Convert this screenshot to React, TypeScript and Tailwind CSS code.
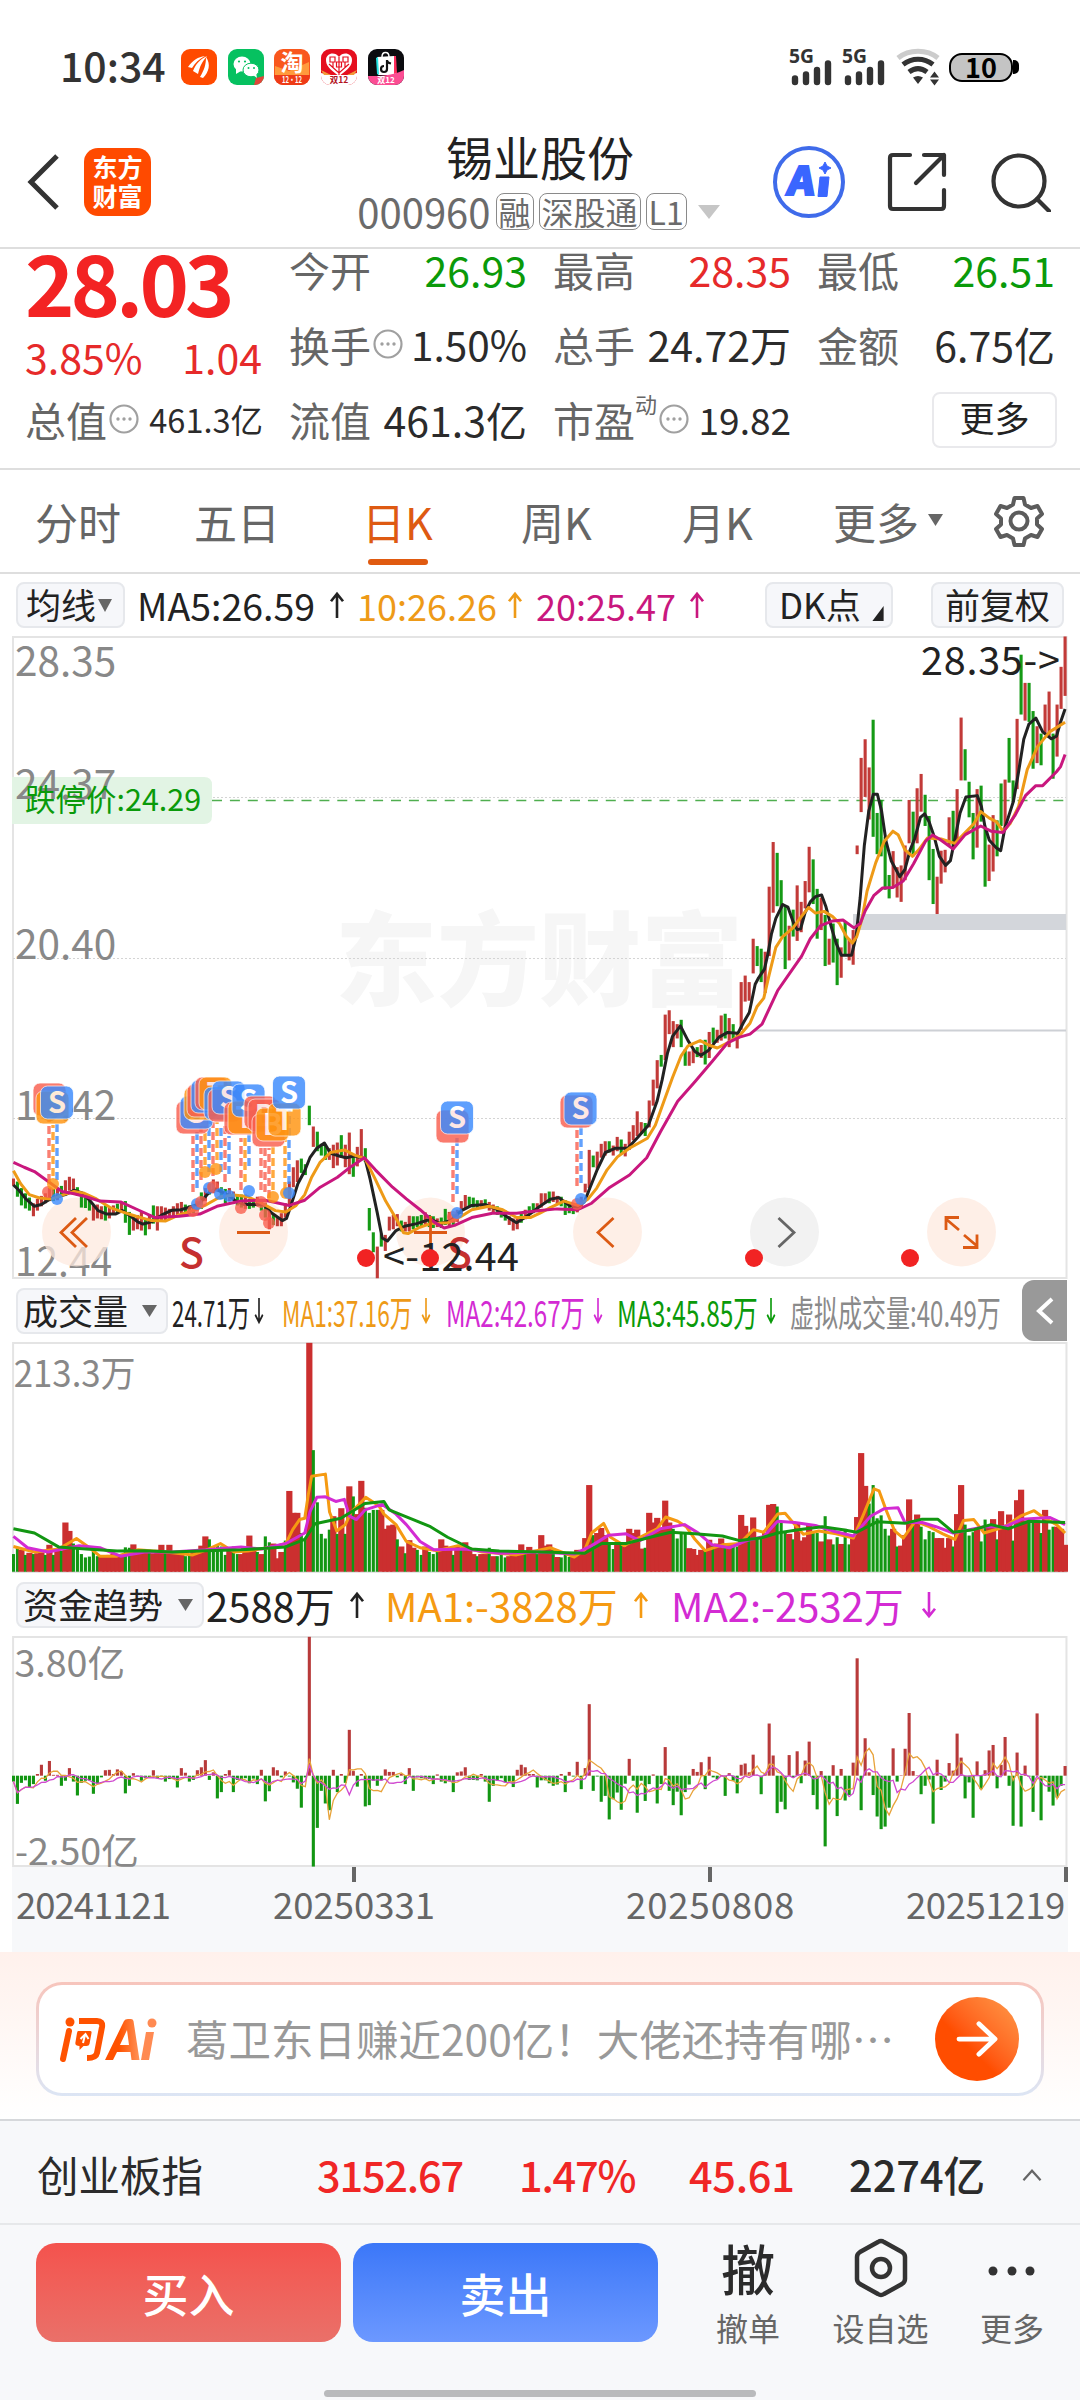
import { ReactNode } from 'react'

const RED = '#cb2f2f'
const GREEN = '#129612'

// horizontal position of the n-th trading day
const barX = (i: number) => 39 + 11.612 * i

// [high, low] per day, a negative high is a falling day
const CANDLES = [
  [1288, 1305], [-1295, 1330], [-1310, 1350], [-1322, 1357], [-1332, 1362], [1345, 1375], [1335, 1362], [1328, 1352],
  [1322, 1345], [1310, 1340], [-1312, 1340], [1310, 1338], [-1305, 1330], [1292, 1320], [1284, 1316], [1288, 1316],
  [-1308, 1328], [-1320, 1355], [-1330, 1356], [-1338, 1362], [1350, 1385], [1348, 1380], [1352, 1382], [-1350, 1385],
  [1355, 1380], [1350, 1372], [-1346, 1370], [1342, 1365], [-1340, 1390], [-1365, 1418], [1375, 1408], [1372, 1405],
  [1365, 1408], [-1380, 1419], [1370, 1405], [-1350, 1392], [1352, 1408], [1352, 1388], [1355, 1385], [1358, 1380],
  [1352, 1378], [1345, 1372], [1342, 1368], [-1348, 1372], [-1350, 1370], [-1348, 1368], [1340, 1362], [-1320, 1358],
  [1310, 1340], [-1300, 1325], [1290, 1322], [1295, 1318], [-1308, 1335], [-1312, 1345], [1310, 1340], [1318, 1340],
  [-1325, 1350], [-1325, 1355], [1325, 1358], [-1335, 1358], [-1335, 1355], [1330, 1352], [-1335, 1362], [-1345, 1378],
  [1355, 1405], [-1370, 1395], [1375, 1398], [1368, 1398], [1345, 1378], [1295, 1350], [1262, 1308], [1246, 1296],
  [-1242, 1275], [-1255, 1280], [-1120, 1165], [1168, 1215], [-1180, 1225], [-1208, 1235], [-1212, 1245], [1218, 1245],
  [1210, 1264], [1205, 1258], [-1188, 1240], [1210, 1262], [1182, 1278], [-1235, 1284], [1215, 1260], [1174, 1240],
  [-1218, 1250], [-1356, 1408], [-1412, 1458], [1445, 1518], [-1415, 1445], [1418, 1455], [1376, 1408], [1372, 1405],
  [1370, 1398], [-1385, 1410], [1388, 1410], [1374, 1410], [-1375, 1405], [-1375, 1400], [-1372, 1400], [1366, 1395],
  [-1372, 1400], [-1375, 1402], [1380, 1400], [-1378, 1402], [-1358, 1395], [1365, 1400], [-1370, 1395], [1360, 1388],
  [1340, 1370], [1326, 1358], [-1330, 1352], [-1332, 1355], [-1338, 1358], [1338, 1355], [-1336, 1355], [1342, 1362],
  [1348, 1368], [-1352, 1372], [-1358, 1378], [-1362, 1385], [1375, 1395], [1380, 1408], [1378, 1405], [-1368, 1390],
  [1360, 1382], [-1352, 1372], [-1345, 1368], [1345, 1365], [1322, 1355], [1322, 1345], [-1318, 1345], [1318, 1342],
  [1328, 1348], [-1330, 1352], [-1338, 1372], [-1345, 1368], [-1348, 1370], [1345, 1366], [1330, 1358], [1300, 1320],
  [1222, 1310], [-1235, 1262], [1226, 1265], [1208, 1240], [1202, 1235], [-1202, 1228], [1212, 1235], [1192, 1225],
  [-1198, 1232], [1208, 1237], [1180, 1222], [1165, 1200], [1133, 1190], [1158, 1185], [-1160, 1190], [1108, 1170],
  [1060, 1120], [1015, 1080], [-1003, 1030], [910, 1015], [900, 955], [925, 985], [932, 965], [-922, 985],
  [-990, 1028], [995, 1028], [990, 1022], [-985, 1008], [980, 1010], [-968, 1025], [950, 1010], [-940, 975],
  [945, 975], [912, 970], [-908, 965], [918, 985], [-932, 970], [950, 988], [835, 945], [820, 880],
  [835, 878], [735, 815], [-752, 798], [-758, 835], [765, 860], [615, 775], [512, 675], [-537, 660],
  [-600, 730], [-660, 805], [705, 785], [-668, 730], [612, 740], [650, 720], [602, 665], [523, 628],
  [-552, 655], [-620, 735], [640, 715], [-680, 798], [735, 795], [-700, 790], [-735, 842], [755, 825],
  [-695, 775], [735, 785], [715, 795], [520, 540], [318, 443], [275, 408], [340, 460], [-230, 500],
  [-445, 540], [-415, 545], [-500, 622], [-588, 642], [533, 618], [570, 640], [566, 650], [520, 600],
  [415, 515], [-442, 545], [388, 515], [355, 442], [-403, 475], [-452, 600], [-528, 655], [592, 678],
  [532, 608], [530, 582], [455, 520], [-440, 525], [390, 508], [225, 370], [-298, 370], [-373, 455],
  [-445, 552], [390, 525], [-382, 465], [-480, 615], [518, 602], [450, 580], [-462, 545], [-377, 475],
  [368, 480], [-272, 375], [-370, 420], [228, 390], [-80, 218], [145, 232], [-145, 235], [-210, 343],
  [245, 330], [-262, 335], [195, 262], [165, 272], [-262, 366], [195, 315], [108, 205], [38, 175],
]

// traded volume per day, negative on falling days
const VOLUME = [
  -42, -57, 52, -40, 45, -42, 44, 46, -40, 64, -40, 50, -50, 117, 97, -67, -54, -42, -34, -36, -50, -37, 36, 38,
  40, 42, 40, 40, -58, -57, 65, 52, 47, 47, -52, 44, 52, 64, -48, 64, 47, 42, 42, -37, -42, 47, 47, 62,
  84, -77, -60, -64, -60, -40, 52, -60, -42, 42, 47, 86, 52, -47, 42, -84, -70, 67, 32, 47, -74, 192, 140, 140,
  -92, -80, 544, -289, -165, -90, -79, -100, 132, -90, 151, -90, 203, -179, 137, 216, -152, -140, -147, -147, 147, 102, 110, 112,
  -77, 60, -44, 75, 57, -52, -40, 60, -47, -42, -52, 77, 62, 52, -40, 62, -52, 70, 57, 42, -37, 42, 42, -57,
  37, -37, -42, -34, 37, 40, 42, 65, -50, 59, 52, -42, 87, 62, 65, -52, 35, -34, -40, -35, 37, 52, 52, 80,
  206, -87, 92, 104, 87, -70, -54, 64, -64, 60, 102, 92, 100, 55, -57, 140, 117, 128, 102, 169, 117, -102, -79, -92,
  -90, 56, 54, 40, 52, -52, 76, -62, 67, 79, -67, 64, -62, -60, 135, 109, -87, 129, -80, -80, 92, 159, 161, -155,
  -117, -94, 90, -77, 117, 74, 82, 112, -92, -92, 72, -132, 77, -65, -82, 66, -102, -65, 82, 130, 282, 204, -162, -206,
  -127, -134, -102, -86, 102, -60, 62, 87, 172, -122, 136, -107, -77, -97, -94, 80, 80, 57, 80, -60, 137, 206, -112, -86,
  -94, 102, -72, -124, 107, 125, -77, 144, 112, 136, -74, 170, 195, 122, -122, -122, 122, -92, 147, -100, -107, 107, 102, 64,
]

// net capital flow per day
const FLOW = [
  -14, -67, -17, -11, -29, -20, 4, 26, -12, 35, 2, 2, -24, -12, 18, -14, -47, -17, -12, -11, -43, -19, -4, 13,
  14, 4, 15, 11, -42, -24, 6, -2, -12, -6, -4, 13, -6, -2, -14, -8, -8, -28, 18, 7, -14, -10, 13, 20,
  37, -10, 8, -54, -39, 4, 13, -39, -10, -8, -6, -18, -7, -20, 14, -61, -37, 20, 13, -4, 10, -2, -16, -31,
  -76, -4, 330, -216, -124, -36, -66, -82, 14, -39, 4, -17, 109, 11, -26, 4, -73, -70, -12, -24, -11, 15, 9, 9,
  -4, 4, -20, 18, -36, -4, -6, -8, -8, -20, 3, -14, -18, -13, -39, 8, 10, 20, -10, -10, -11, 4, -14, -62,
  -24, -12, -6, -16, -14, -27, 14, 26, 20, 4, 4, -28, -11, -11, -18, -24, -21, 4, -39, 9, -2, 33, -32, 18,
  170, -36, -2, -62, -48, -104, -56, -40, -81, -19, 40, -12, -88, -12, -60, -20, 3, -66, -20, 68, -36, -70, -38, -94,
  -39, -21, 16, 9, 32, -32, 45, -4, -8, 1, -48, 6, -12, -42, 26, 29, 8, 50, 1, -44, 6, 124, 48, -89,
  -62, -80, 49, -4, 58, -18, 36, 81, -46, -80, 11, -168, -56, 25, -96, 16, -59, -46, 31, 279, -82, 89, 8, -46,
  -97, -127, -121, -76, 65, -14, 1, 64, 149, 11, 1, -44, -24, -9, -114, 38, -34, -14, 30, 12, 100, 43, -54, -16,
  -100, 34, -32, 13, 60, 73, -30, 26, 92, -24, -119, 55, -121, 24, -2, -86, 148, -106, -6, -38, -71, -52, -24, 23,
]

const PRICE_MA = [
  { color: '#222222', points: '39,1303 55,1315 75,1335 100,1352 120,1348 140,1338 165,1330 190,1325 215,1315 240,1322 262,1340 285,1362 310,1370 335,1370 355,1362 380,1375 400,1388 415,1393 440,1388 470,1372 500,1361 525,1360 560,1352 580,1345 605,1322 625,1312 660,1325 685,1340 710,1348 740,1348 765,1348 790,1368 820,1385 832,1380 845,1350 865,1300 885,1270 900,1240 920,1218 942,1206 960,1230 985,1236 1005,1240 1030,1236 1060,1242 1075,1290 1095,1365 1110,1425 1125,1432 1150,1408 1175,1398 1210,1392 1250,1382 1280,1392 1310,1384 1340,1362 1370,1350 1410,1348 1440,1358 1470,1375 1500,1390 1530,1375 1568,1352 1598,1336 1623,1332 1653,1350 1678,1355 1698,1340 1713,1310 1733,1270 1758,1228 1788,1218 1823,1218 1853,1192 1883,1165 1908,1110 1923,1060 1938,1000 1953,960 1976,936 1998,970 2018,995 2035,1004 2058,992 2088,962 2113,951 2143,953 2158,930 2176,905 2193,840 2203,825 2220,805 2230,770 2240,725 2253,688 2273,656 2288,662 2305,700 2315,714 2325,712 2338,675 2353,650 2368,638 2386,634 2398,660 2413,705 2428,745 2443,773 2473,773 2486,730 2498,640 2510,520 2523,440 2536,402 2548,402 2560,440 2573,510 2588,555 2613,592 2628,575 2643,530 2656,505 2673,455 2685,447 2698,465 2713,500 2728,545 2746,566 2760,555 2773,505 2788,445 2805,408 2838,405 2850,430 2860,475 2873,508 2893,525 2906,532 2918,480 2943,418 2958,350 2973,275 2988,240 3008,226 3028,258 3053,274 3068,268 3080,235 3093,205' },
  { color: '#ee9a17', points: '39,1270 60,1300 85,1325 115,1333 150,1335 185,1325 215,1318 245,1322 280,1335 320,1355 355,1365 395,1375 440,1385 480,1386 520,1372 560,1362 600,1348 640,1330 680,1326 720,1330 760,1345 800,1362 830,1365 860,1350 885,1325 905,1285 930,1250 960,1228 1000,1222 1030,1234 1060,1242 1090,1290 1120,1340 1150,1380 1172,1413 1185,1415 1215,1402 1250,1392 1300,1390 1340,1375 1370,1360 1420,1352 1460,1360 1500,1378 1540,1378 1568,1368 1598,1355 1638,1340 1678,1350 1708,1335 1733,1310 1763,1268 1793,1238 1828,1218 1858,1205 1880,1195 1903,1165 1928,1110 1953,1055 1978,1005 1998,982 2033,970 2058,980 2083,987 2113,975 2148,958 2178,930 2198,892 2218,872 2233,820 2253,755 2273,730 2303,710 2323,688 2348,663 2368,676 2393,672 2418,684 2438,700 2458,730 2475,745 2488,730 2503,690 2518,625 2543,560 2568,510 2593,487 2608,495 2628,530 2650,545 2668,530 2693,503 2733,505 2773,515 2803,490 2828,470 2848,442 2873,457 2893,465 2913,487 2933,470 2958,430 2983,345 3013,292 3048,258 3093,236' },
  { color: '#c9177e', points: '39,1251 70,1262 100,1272 140,1295 180,1318 215,1323 250,1330 290,1340 350,1342 400,1360 450,1378 520,1375 580,1370 630,1352 700,1340 770,1338 840,1350 885,1338 930,1308 980,1285 1020,1260 1058,1240 1090,1268 1140,1308 1180,1335 1220,1360 1260,1388 1290,1402 1320,1396 1370,1378 1430,1368 1500,1368 1568,1362 1618,1358 1678,1360 1718,1345 1768,1310 1828,1280 1878,1240 1918,1180 1968,1110 2018,1065 2068,1018 2113,975 2148,962 2178,955 2213,932 2258,855 2293,815 2328,775 2353,735 2383,705 2418,694 2448,692 2480,710 2498,700 2513,670 2538,635 2563,618 2593,617 2623,602 2653,562 2688,510 2708,496 2728,505 2768,528 2803,495 2848,475 2878,487 2913,490 2948,450 2978,405 3008,382 3028,382 3068,350 3080,338 3093,310' },
]

const VOLUME_MA = [
  { color: '#f59a12', points: '39,632 100,645 170,638 222,613 260,635 290,655 340,655 400,640 480,645 560,652 600,640 640,625 680,645 720,643 800,632 830,625 850,592 870,568 885,565 895,510 905,465 945,460 957,550 978,595 1003,580 1020,550 1045,530 1062,515 1100,535 1115,555 1150,580 1180,620 1220,635 1270,642 1330,630 1400,645 1500,652 1568,640 1598,635 1668,657 1698,640 1718,600 1753,577 1773,610 1813,630 1858,610 1908,590 1933,562 1968,572 1993,585 2018,615 2048,642 2098,628 2148,625 2188,592 2218,598 2258,555 2280,553 2308,580 2333,603 2378,595 2428,602 2478,612 2508,555 2538,495 2553,500 2573,545 2598,595 2623,612 2658,572 2698,585 2738,602 2773,615 2798,570 2828,568 2858,600 2918,585 2963,560 3003,547 3028,562 3068,580 3093,600' },
  { color: '#d32bd3', points: '39,608 80,635 140,645 230,630 290,635 350,655 420,645 500,645 600,640 700,633 760,638 830,625 885,600 900,550 920,515 945,514 975,525 1000,520 1015,560 1035,568 1060,545 1110,532 1150,555 1180,580 1220,620 1260,640 1350,638 1450,648 1568,645 1668,650 1718,630 1768,605 1818,602 1858,618 1918,590 1988,580 2028,600 2068,628 2118,635 2168,618 2218,608 2258,572 2308,575 2368,582 2418,595 2478,607 2528,560 2568,542 2608,540 2628,575 2678,575 2718,585 2768,600 2858,585 2918,585 2968,567 3048,563 3093,580' },
  { color: '#129612', points: '39,590 100,600 170,633 250,638 340,643 420,642 500,645 600,642 700,640 830,633 885,615 915,578 990,565 1060,530 1115,525 1130,545 1200,568 1250,585 1300,610 1370,638 1450,643 1568,645 1698,648 1748,625 1818,625 1888,610 1948,598 2018,602 2098,607 2148,618 2208,612 2258,600 2318,592 2388,585 2448,592 2488,598 2548,573 2628,577 2678,567 2723,567 2768,598 2828,592 2878,580 2928,590 2988,572 3093,575' },
]

const MARK: Record<string, string> = { r: '#f95f4f', o: '#ff9410', b: '#3b8afd' }

// trade badges: x, y, colour, letter
const BADGES: [number, number, string, string][] = [
  [33, 1083, 'r', ''], [36, 1091, 'o', ''], [40.5, 1086, 'b', 'S'],
  [176, 1101, 'r', ''], [180, 1096, 'b', 'S'], [184, 1087, 'o', ''], [187, 1084, 'r', ''], [191, 1080, 'b', ''],
  [195, 1077, 'r', ''], [199, 1077, 'o', 'T'], [204, 1087, 'b', ''], [208, 1089, 'r', ''], [212, 1081, 'b', 'S'],
  [224, 1102, 'r', ''], [228, 1101, 'o', 'T'], [232, 1084, 'b', 'S'], [244, 1096, 'r', ''], [248, 1099, 'r', 'B'],
  [252, 1114, 'r', ''], [256, 1108, 'o', 'B'], [268, 1103, 'o', 'T'], [272.5, 1076, 'b', 'S'],
  [436, 1110, 'r', ''], [440.5, 1101, 'b', 'S'],
  [560, 1095, 'r', ''], [564, 1092, 'b', 'S'],
]

// dashed stems: x, top, bottom, colour
const STEMS: [number, number, number, string][] = [
  [49, 1120, 1182, 'r'], [53, 1125, 1176, 'o'], [57, 1121, 1180, 'b'],
  [193, 1136, 1192, 'r'], [197, 1132, 1188, 'b'], [201, 1126, 1180, 'r'], [205, 1126, 1165, 'o'], [209, 1120, 1172, 'b'],
  [213, 1122, 1176, 'r'], [217, 1122, 1160, 'o'], [221, 1124, 1172, 'b'], [225, 1124, 1182, 'r'], [229, 1136, 1174, 'b'],
  [241, 1138, 1190, 'r'], [245, 1136, 1182, 'o'], [249, 1134, 1166, 'b'],
  [261, 1148, 1190, 'r'], [265, 1148, 1192, 'r'], [269, 1148, 1198, 'r'], [273, 1142, 1190, 'o'],
  [285, 1136, 1190, 'o'], [289, 1110, 1184, 'b'],
  [453, 1145, 1202, 'r'], [457, 1136, 1194, 'b'], [577, 1129, 1186, 'r'], [581, 1126, 1183, 'b'],
]

const DOTS: [number, number, string][] = [
  [48, 1192, 'r'], [53, 1184, 'o'], [57, 1199, 'b'], [193, 1211, 'r'], [197, 1204, 'b'], [201, 1202, 'r'],
  [205, 1172, 'o'], [209, 1188, 'b'], [213, 1187, 'r'], [216, 1169, 'o'], [220, 1194, 'b'], [229, 1196, 'b'],
  [241, 1208, 'r'], [249, 1191, 'b'], [261, 1202, 'r'], [265, 1215, 'r'], [269, 1223, 'r'], [273, 1197, 'o'],
  [286, 1193, 'o'], [289, 1193, 'b'], [453, 1217, 'r'], [457, 1213, 'b'], [577, 1204, 'r'], [581, 1199, 'b'],
]

function average(values: number[], days: number) {
  return values.map((_, i) => {
    const part = values.slice(Math.max(0, i - days + 1), i + 1)
    return part.reduce((a, b) => a + b, 0) / part.length
  })
}

function Arrow({ down, narrow }: { down?: boolean, narrow?: boolean }) {
  return <svg viewBox="0 0 16 30" preserveAspectRatio="none" className={`h-[28px] flex-none ${narrow ? 'w-[10px]' : 'w-[16px]'} ${down ? 'rotate-180' : ''}`} fill="none" stroke="currentColor" strokeWidth="2.6">
    <path d="M8 29V3M2 11l6-8 6 8" />
  </svg>
}

function Triangle({ className }: { className: string }) {
  return <svg viewBox="0 0 10 8" preserveAspectRatio="none" className={`flex-none ${className}`} fill="currentColor">
    <path d="M0 0h10L5 8z" />
  </svg>
}

function Hint() {
  return <svg viewBox="0 0 30 30" className="ml-[2px] size-[30px] flex-none" fill="none" stroke="#a0a0a0" strokeWidth="2.200">
    <circle cx="15" cy="15" r="13.5" />
    <path d="M9 15h.01M15 15h.01M21 15h.01" strokeWidth="3.400" strokeLinecap="round" />
  </svg>
}

function SignalIcon() {
  return <svg viewBox="0 0 44 38" className="h-[38px] w-[44px] overflow-visible">
    <text x="-1" y="15" fontSize="19.500" fontWeight="700" fill="#333" fontFamily="Noto Sans" textLength="25" lengthAdjust="spacingAndGlyphs">5G</text>
    <g stroke="#333" strokeWidth="6.400" strokeLinecap="round">
      <path d="M5 30.500v3.500M16 26.500v7.500M27 22v12M38 15.500v18.500" />
    </g>
  </svg>
}

function StatusBar() {
  return <div className="flex h-[118px] items-center pt-[16px] pl-[60px]">
    <div className="w-[121px] pb-[5px] text-[41px] leading-none font-medium text-[#333]">10:34</div>
    <div className="flex gap-[10.7px]">
      <svg viewBox="0 0 36 36" className="size-[36px]">
        <rect width="36" height="36" rx="9" fill="#ff4a00" />
        <path d="M7 18c5-7 10-10 17-11-6 3-10 7-13 12zM12 22c3-7 6-11 14-15-5 6-7 10-9 18zM19 28c4-7 6-12 6-20 5 7 3 15-3 21z" fill="#fff" />
      </svg>
      <svg viewBox="0 0 36 36" className="size-[36px]">
        <rect width="36" height="36" rx="9" fill="#06c160" />
        <ellipse cx="14" cy="15" rx="8.500" ry="7.500" fill="#fff" />
        <path d="M8 19l0 6 5-3z" fill="#fff" />
        <ellipse cx="23" cy="21" rx="8" ry="6.800" fill="#fff" stroke="#06c160" />
        <path d="M25 26l4 3-1-5z" fill="#fff" />
        <g fill="#06c160"><circle cx="11" cy="12.500" r="1.100" /><circle cx="17" cy="12.500" r="1.100" /><circle cx="20.500" cy="19" r="1" /><circle cx="26" cy="19" r="1" /></g>
        <path d="M36 27v0a9 9 0 0 1-9 9h-1l2-7z" fill="#e2463b" />
      </svg>
      <svg viewBox="0 0 36 36" className="size-[36px]">
        <rect width="36" height="36" rx="9" fill="#f9571d" />
        <path d="M1 17l14 5 20-9v14H1z" fill="#ff9a3c" />
        <text x="18" y="22" textAnchor="middle" fontSize="23" fontWeight="700" fill="#fff">淘</text>
        <path d="M0 26h36v1a9 9 0 0 1-9 9H9a9 9 0 0 1-9-9z" fill="#ee3b17" />
        <text x="18" y="34" textAnchor="middle" fontSize="9" fontWeight="700" fill="#fff" textLength="20" lengthAdjust="spacingAndGlyphs">12·12</text>
      </svg>
      <svg viewBox="0 0 36 36" className="size-[36px]">
        <rect width="36" height="36" rx="9" fill="#e50f1f" />
        <path d="M18 27C8 20 5 16 5 11c0-7 9-9 13-3 4-6 13-4 13 3 0 5-3 9-13 16z" fill="#fff" />
        <path d="M9 8h5v5H9zM22 8h5v5h-5zM15.500 13h5v5h-5zM18 8v18M8 15l10 9 10-9M12 13v6M24 13v6" fill="none" stroke="#e50f1f" strokeWidth="1.200" />
        <path d="M0 24l9 2h18l9-2v3a9 9 0 0 1-9 9H9a9 9 0 0 1-9-9z" fill="#fff" />
        <path d="M0 21l10 5H3zM36 21l-10 5h7z" fill="#f29a38" />
        <text x="18" y="34" textAnchor="middle" fontSize="8.500" fontWeight="700" fill="#b3131f">双12</text>
      </svg>
      <svg viewBox="0 0 36 36" className="size-[36px]">
        <rect width="36" height="36" rx="9" fill="#0b0b0f" />
        <path d="M9 8l17-1 2 19H10z" fill="#fff" />
        <path d="M26 7l2 0 1 17-3 1z" fill="#ff2c5c" />
        <path d="M8 9l2-1 1 18-2-1z" fill="#24e4e4" />
        <path d="M14 8c0-6 7-6 7 0" fill="none" stroke="#fff" strokeWidth="1.500" />
        <path d="M19 11v9a3 3 0 1 1-3-3M19 11c0 2 1 3 4 3.500" fill="none" stroke="#111" strokeWidth="2.200" />
        <path d="M0 27c12 0 24 0 36-6v6a9 9 0 0 1-9 9H9a9 9 0 0 1-9-9z" fill="#fb4d93" />
        <text x="18" y="34" textAnchor="middle" fontSize="8" fontWeight="700" fill="#fff">双12</text>
      </svg>
    </div>
    <div className="ml-auto flex items-center gap-[9px] pr-[61px]">
      <SignalIcon />
      <SignalIcon />
      <svg viewBox="0 0 44 38" className="h-[38px] w-[44px]" fill="none" strokeWidth="5">
        <path d="M2 10c11-9 29-9 40 0" stroke="#ccc" />
        <path d="M7 16.500c9-7 21-7 30 0M13 24c6-4.500 12-4.500 18 0" stroke="#333" />
        <path d="M17 29.500q5-3 10 0L22 36zM34 29.500l4.500-6 4.500 6zM34 31.500l4.500 6 4.500-6z" fill="#333" />
      </svg>
      <div className="flex items-center">
        <div className="flex h-[29px] w-[64px] items-center justify-center rounded-[13px] border-2 border-black bg-[#c4c4c4] pb-[2px] text-[27px] leading-none font-bold text-black">10</div>
        <div className="h-[14px] w-[6px] rounded-r-[5px] bg-black" />
      </div>
    </div>
  </div>
}

function Tag({ children }: { children: ReactNode }) {
  return <span className="flex h-[37px] items-center rounded-[8px] border border-[#8a8a8a] px-[2px] pb-[2px] text-[32px] leading-none">{children}</span>
}

function Header() {
  return <div className="flex h-[131px] items-center border-b-2 border-[#dedede] pr-[29px] pb-[1px] pl-[26px]">
    <svg viewBox="0 0 34 56" className="h-[56px] w-[34px]" fill="none" stroke="#333" strokeWidth="5">
      <path d="M31 2L5 28l26 26" />
    </svg>
    <div className="ml-[24px] flex h-[68px] w-[67px] flex-col items-center justify-center rounded-[14px] bg-[#ff4a00] pb-[2px] text-[25px] leading-[29px] font-bold text-white">
      <span>东方</span><span>财富</span>
    </div>
    <div className="ml-[157px] flex w-[464px] flex-col items-center">
      <div className="text-[47px] leading-[56px] text-[#222]">锡业股份</div>
      <div className="mt-[3px] mr-[3px] flex h-[50px] items-center gap-[5px] text-[40px] leading-none text-[#6b6b6b]">
        <span className="pb-[2px]">000960</span>
        <Tag>融</Tag><Tag>深股通</Tag><Tag>L1</Tag>
        <Triangle className="ml-[6px] h-[14px] w-[22px] text-[#c6c6c6]" />
      </div>
    </div>
    <svg viewBox="0 0 74 74" className="size-[74px]" fill="none">
      <circle cx="37" cy="37" r="34" stroke="#3f6bea" strokeWidth="4" />
      <text x="21" y="50" transform="skewX(-8)" fontSize="39" fontWeight="900" fill="#3a66ff" stroke="#3a66ff" strokeWidth="2" textLength="27" lengthAdjust="spacingAndGlyphs">A</text>
      <path d="M48 32h9l-2 19.500h-9z" fill="#3a66ff" stroke="#3a66ff" strokeLinejoin="round" />
      <path d="M53 17l2 4 4 2-4 2-2 4-2-4-4-2 4-2z" fill="#3a66ff" stroke="#3a66ff" />
    </svg>
    <svg viewBox="0 0 60 60" className="ml-[41px] size-[60px]" fill="none" stroke="#333" strokeWidth="4.200" strokeLinecap="round" strokeLinejoin="round">
      <path d="M23 3H6Q3 3 3 6v48q0 3 3 3h48q3 0 3-3V38M37 3h20v20M57 3L29 31" />
    </svg>
    <svg viewBox="0 0 60 60" className="ml-[44px] size-[60px]" fill="none" stroke="#333" strokeWidth="4.200" strokeLinecap="round">
      <circle cx="28" cy="29" r="25.500" />
      <path d="M46 47l12 12" />
    </svg>
  </div>
}

function Quote({ label, value, color = 'text-[#2b2b2b]', size = 'text-[41px]', children }: { label: string, value: string, color?: string, size?: string, children?: ReactNode }) {
  return <div className="-mr-[1px] flex h-[46px] items-center pb-[6px]">
    <span className="text-[41px] text-[#666]">{label}</span>
    {children}
    <span className={`ml-auto ${size} ${color}`}>{value}</span>
  </div>
}

function Quotes() {
  return <div className="grid h-[221px] grid-cols-4 gap-x-[27px] border-b-2 border-[#dedede] pr-[26px] pl-[25px] leading-none whitespace-nowrap">
    <div>
      <div className="h-[71px] text-[84px] leading-[64px] font-bold tracking-[-4px] text-[#f32323]">28.03</div>
      <div className="flex h-[79px] items-center justify-between pb-[6px] text-[41px] text-[#e62a2a]"><span>3.85%</span><span>1.04</span></div>
      <Quote label="总值" value="461.3亿" size="text-[32.5px]"><Hint /></Quote>
    </div>
    <div className="flex flex-col gap-[29px]">
      <Quote label="今开" value="26.93" color="text-[#0a9a0a]" />
      <Quote label="换手" value="1.50%" size="text-[40.500px]"><Hint /></Quote>
      <Quote label="流值" value="461.3亿" />
    </div>
    <div className="flex flex-col gap-[29px]">
      <Quote label="最高" value="28.35" color="text-[#e62a2a]" />
      <Quote label="总手" value="24.72万" />
      <Quote label="市盈" value="19.82" size="text-[37px]">
        <span className="mb-[32px] text-[22px] text-[#666]">动</span><Hint />
      </Quote>
    </div>
    <div className="flex flex-col gap-[29px]">
      <Quote label="最低" value="26.51" color="text-[#0a9a0a]" />
      <Quote label="金额" value="6.75亿" />
      <div className="-mt-[7px] -mr-[3px] ml-auto flex h-[56px] w-[125px] items-center justify-center rounded-[8px] border-2 border-[#e9e9ec] pb-[7px] text-[35px] text-[#222]">更多</div>
    </div>
  </div>
}

function Tabs() {
  const tab = 'text-[#666] text-[43px]'
  return <div className="flex h-[104px] items-center border-b-2 border-[#dedede] px-[35px] leading-none">
    <div className={`w-[159px] ${tab}`}>分时</div>
    <div className={`w-[168px] ${tab}`}>五日</div>
    <div className="relative w-[159px] text-[43px] text-[#de5a12]">日K<div className="absolute top-[59px] left-[6px] h-[6px] w-[60px] rounded-full bg-[#e05a10]" /></div>
    <div className={`w-[161px] ${tab}`}>周K</div>
    <div className={`w-[151px] ${tab}`}>月K</div>
    <div className={`flex items-center gap-[9px] ${tab}`}>更多<Triangle className="mb-[2px] h-[12px] w-[15px]" /></div>
    <svg viewBox="0 0 52 52" className="ml-auto size-[52px]" fill="none" stroke="#5c5c5c" strokeWidth="4" strokeLinejoin="round">
      <path d="M21.500 3h9l1.500 6.500 6 3.500 6.500-2 4.500 8-5 4.500v6l5 4.500-4.500 8-6.500-2-6 3.500-1.500 6.500h-9L20 43.500 14 40l-6.500 2L3 34l5-4.500v-6L3 19l4.500-8 6.500 2 6-3.500z" />
      <circle cx="26" cy="26" r="8.500" />
    </svg>
  </div>
}

function Chip({ children, className }: { children: ReactNode, className: string }) {
  return <div className={`flex h-[46px] flex-none items-center rounded-[8px] border-2 border-[#e6e8ec] bg-[#f6f7fa] pb-[2px] text-[35px] leading-none text-[#222] ${className}`}>{children}</div>
}

function AverageRow() {
  return <div className="flex h-[62px] items-center pb-[1px] pl-[16px] text-[36.500px] leading-none">
    <Chip className="w-[109px] pl-[8px]">均线<Triangle className="mt-[3px] ml-[2px] h-[13px] w-[14px] text-[#666]" /></Chip>
    <div className="flex w-[222px] items-center justify-between pr-[2px] pl-[12px] text-[37.500px] text-[#222]">MA5:26.59<Arrow /></div>
    <div className="flex w-[178px] items-center justify-between pr-[2px] pl-[10px] text-[36px] text-[#ee9a17]">10:26.26<Arrow /></div>
    <div className="flex w-[182px] items-center justify-between pr-[2px] pl-[11px] text-[36px] text-[#c9177e]">20:25.47<Arrow /></div>
    <Chip className="ml-[58px] w-[128px] pl-[12px]">DK点
      <svg viewBox="0 0 12 16" className="mt-[20px] ml-[11px] h-[15px] w-[12px]"><path d="M12 0v16H0z" fill="#222" /></svg>
    </Chip>
    <Chip className="ml-[38px] w-[133px] justify-center">前复权</Chip>
  </div>
}

function PriceChart() {
  return <svg viewBox="12 636 1056 643" className="mx-[12px] block h-[643px] w-[1056px]">
    <rect x="13" y="637" width="1053.500" height="641" fill="#fff" stroke="#e4e4e4" strokeWidth="2" />
    <text x="335" y="998" fontSize="102" fontWeight="900" fill="#f6f6f6">东方财富</text>
    <g stroke="#d4d4d4" strokeDasharray="2 2">
      <path d="M13 797.500H1066M13 958.500H1066M13 1118.500H1066" />
    </g>
    <rect x="853" y="914" width="213" height="16" fill="#d3d6db" />
    <path d="M755 1030.500H1066" stroke="#cdd0d5" strokeWidth="2" />
    <path d="M12 777h192q8 0 8 8v31q0 8-8 8H12z" fill="#e2f4e4" />
    <g fontSize="40.500" fill="#888">
      <text x="15" y="676">28.35</text>
      <text x="15" y="799">24.37</text>
      <text x="15" y="959">20.40</text>
      <text x="15" y="1120">16.42</text>
      <text x="15" y="1276" textLength="97" lengthAdjust="spacingAndGlyphs">12.44</text>
    </g>
    <text x="25" y="811" fontSize="30.500" fill="#0a9a0a">跌停价:24.29</text>
    <path d="M212 800.500H1066" stroke="#4fae4f" strokeWidth="1.600" strokeDasharray="10 7.900" />
    <g fill="#fde9df" fillOpacity=".75">
      <circle cx="76.500" cy="1232" r="34.500" /><circle cx="253.500" cy="1232" r="34.500" /><circle cx="430.500" cy="1232" r="34.500" />
      <circle cx="607.500" cy="1232" r="34.500" /><circle cx="961.500" cy="1232" r="34.500" />
    </g>
    <circle cx="784.500" cy="1232" r="34.500" fill="#f2f2f2" />

    <svg x="12" y="636" width="1056" height="643" viewBox="34.850 36.900 3066.600 1482.800" preserveAspectRatio="none">
      {CANDLES.map(([high, low], i) => <rect key={i} x={barX(i) - 4.5} y={Math.abs(high)} width="9" height={low - Math.abs(high)} fill={high > 0 ? '#c23a38' : '#159a15'} />)}
      {PRICE_MA.map(line => <polyline key={line.color} points={line.points} fill="none" stroke={line.color} strokeWidth="3" strokeLinejoin="round" vectorEffect="non-scaling-stroke" />)}
    </svg>

    {STEMS.map(([x, top, bottom, c]) => <path key={x} d={`M${x} ${bottom}V${top}`} stroke={MARK[c]} strokeOpacity=".8" strokeWidth="3.400" strokeDasharray="8 4" />)}
    {DOTS.map(([x, y, c]) => <circle key={`${x}-${y}`} cx={x} cy={y} r="6" fill={MARK[c]} fillOpacity=".8" />)}
    {BADGES.map(([x, y, c, letter]) => <g key={x} opacity=".82">
      <rect x={x} y={y} width="33" height="33" rx="7" fill={MARK[c]} stroke="#fff" strokeWidth=".8" />
      <text x={x + 16.500} y={y + 27} textAnchor="middle" fontSize="29" fontWeight="700" fill="#fff">{letter}</text>
    </g>)}

    <g fill="none" stroke="#dc5a14" strokeWidth="2.800">
      <path d="M76 1218l-15 14.500 15 14.500M87 1218l-15 14.500 15 14.500M237 1232.500h33M414 1232.500h33M430.500 1216v33M613.500 1218l-15.500 14.500 15.500 14.500" />
      <path d="M959 1230l-13-11M946 1230v-12.500h13M964 1235l13 11M977 1234.500v13h-14" />
    </g>
    <path d="M778.500 1218l15.500 14.500-15.500 14.500" fill="none" stroke="#666" strokeWidth="2.800" />
    <g fontSize="41" fontWeight="500" fill="#c5302f">
      <text x="179" y="1268">S</text><text x="447" y="1268">S</text>
    </g>
    <g fontSize="39.500" fill="#222">
      <text x="921" y="675" textLength="139">28.35-&gt;</text>
      <text x="383" y="1271" textLength="136">&lt;-12.44</text>
    </g>
    <g fill="#f12323">
      <circle cx="366" cy="1258" r="9" /><circle cx="430" cy="1258" r="9" /><circle cx="754" cy="1258" r="9" /><circle cx="910" cy="1258" r="9" />
    </g>
  </svg>
}

function VolumeSection() {
  return <>
    <div className="flex h-[63px] items-center pl-[16px] text-[36px] leading-none whitespace-nowrap">
      <Chip className="w-[152px] pl-[5px]">成交量<Triangle className="mt-[3px] ml-[14px] h-[12px] w-[15px] text-[#666]" /></Chip>
      <div className="ml-[4px] w-[82px] text-[#222]"><span className="inline-block origin-left scale-x-[.62]">24.71万</span></div>
      <div className="text-[#222]"><Arrow down narrow /></div>
      <div className="ml-[18px] w-[139px] text-[#ee9a17]"><span className="inline-block origin-left scale-x-[.63]">MA1:37.16万</span></div>
      <div className="text-[#ee9a17]"><Arrow down narrow /></div>
      <div className="ml-[15px] w-[147px] text-[#d32bd3]"><span className="inline-block origin-left scale-x-[.67]">MA2:42.67万</span></div>
      <div className="text-[#d32bd3]"><Arrow down narrow /></div>
      <div className="ml-[14px] w-[149px] text-[#0a9a0a]"><span className="inline-block origin-left scale-x-[.68]">MA3:45.85万</span></div>
      <div className="text-[#0a9a0a]"><Arrow down narrow /></div>
      <div className="ml-[14px] w-[232px] text-[#8a8a8a]"><span className="inline-block origin-left scale-x-[.667]">虚拟成交量:40.49万</span></div>
      <div className="flex h-[61px] w-[45px] items-center justify-center rounded-l-[12px] bg-[#999]">
        <svg viewBox="0 0 18 28" className="h-[28px] w-[18px]" fill="none" stroke="#fff" strokeWidth="4"><path d="M16 2L3 14l13 12" /></svg>
      </div>
    </div>
    <svg viewBox="34.850 146 3066.600 549" preserveAspectRatio="none" className="mx-[12px] block h-[231px] w-[1056px]">
      <rect x="38" y="148.500" width="3059" height="544" fill="#fff" stroke="#e4e4e4" strokeWidth="2" vectorEffect="non-scaling-stroke" />
      <text x="40" y="252" transform="matrix(1.175 0 0 1 -7 0)" fontSize="86" fill="#888">213.3万</text>
      {VOLUME.map((v, i) => <rect key={i} x={barX(i) - (v > 0 ? 9 : 4.5)} y={692 - Math.abs(v)} width={v > 0 ? 18 : 9} height={Math.abs(v)} fill={v > 0 ? RED : GREEN} />)}
      {VOLUME_MA.map(line => <polyline key={line.color} points={line.points} fill="none" stroke={line.color} strokeWidth="3" strokeLinejoin="round" vectorEffect="non-scaling-stroke" />)}
    </svg>
  </>
}

function FlowSection() {
  const line = (days: number) => average(FLOW, days).map((v, i) => `${barX(i)},${1176 - v}`).join(' ')
  return <>
    <div className="flex h-[63px] items-center pl-[16px] text-[40px] leading-none whitespace-nowrap">
      <Chip className="w-[188px] pl-[5px]">资金趋势<Triangle className="mt-[3px] ml-[15px] h-[12px] w-[15px] text-[#666]" /></Chip>
      <div className="ml-[2px] flex w-[159px] items-center justify-between text-[#222]">2588万<Arrow /></div>
      <div className="ml-[20px] flex w-[264px] items-center justify-between text-[#f59a12]">MA1:-3828万<Arrow /></div>
      <div className="ml-[22px] flex w-[266px] items-center justify-between text-[#d32bd3]">MA2:-2532万<Arrow down /></div>
    </div>
    <svg viewBox="34.850 844 3066.600 549" preserveAspectRatio="none" className="mx-[12px] block h-[231px] w-[1056px]">
      <rect x="38" y="846.500" width="3059" height="544" fill="#fff" stroke="#e4e4e4" strokeWidth="2" vectorEffect="non-scaling-stroke" />
      <text x="40" y="941" transform="matrix(1.270 0 0 1 -9 0)" fontSize="86" fill="#888">3.80亿</text>
      <text x="40" y="1389" transform="matrix(1.270 0 0 1 -7 0)" fontSize="86" fill="#888">-2.50亿</text>
      {FLOW.map((v, i) => <rect key={i} x={barX(i) - 4.5} y={v > 0 ? 1176 - v : 1176} width="9" height={Math.abs(v)} fill={v > 0 ? '#b83a3a' : GREEN} />)}
      <polyline points={line(5)} fill="none" stroke="#e8a33a" strokeWidth="1.300" vectorEffect="non-scaling-stroke" />
      <polyline points={line(10)} fill="none" stroke="#d04ad0" strokeWidth="1.300" vectorEffect="non-scaling-stroke" />
    </svg>
  </>
}

function DateAxis() {
  return <div className="mx-[12px] h-[85px] bg-[#f7f8fa] text-[36.500px] leading-none text-[#666]">
    <div className="flex h-[17px] justify-end">
      <div className="mr-[352px] h-[15px] w-[4px] bg-[#666]" />
      <div className="mr-[352px] h-[15px] w-[4px] bg-[#666]" />
      <div className="h-[15px] w-[4px] bg-[#666]" />
    </div>
    <div className="flex pt-[2px]">
      <span className="w-[258px] pl-[4px] tracking-[-1px]">20241121</span>
      <span className="w-[353px] pl-[3px]">20250331</span>
      <span className="w-[283px] pl-[3px] tracking-[.9px]">20250808</span>
      <span className="tracking-[-.4px]">20251219</span>
    </div>
  </div>
}

function AskAi() {
  return <div className="h-[167px] bg-linear-to-b from-[#fff1ec] to-white pt-[30px] pl-[36px]">
    <div className="h-[114px] w-[1008px] rounded-[26px] bg-linear-to-b from-[#f7c5bc] to-[#dce5f4] p-[3px]">
      <div className="flex h-full items-center rounded-[23px] bg-white pl-[20px]">
        <svg viewBox="0 0 100 46" className="h-[46px] w-[100px]">
          <defs>
            <linearGradient id="ask" x1="0" x2="1"><stop offset=".4" stopColor="#ff5200" /><stop offset="1" stopColor="#ff9258" /></linearGradient>
          </defs>
          <g fill="none" stroke="#ff5200" strokeWidth="6" strokeLinejoin="round">
            <path d="M10 15L4 43" strokeLinecap="round" /><path d="M20 5h18q6 0 5 6l-5 26q-1 5-10 5" />
          </g>
          <circle cx="11" cy="6" r="4.500" fill="#ff5200" />
          <path d="M19 15h12q2 0 1.500 2l-2 11q-.5 2-3 2h-3l-4 4v-4q-5 0-4-4l1.500-9q.5-2 1-2z" fill="#ff5200" />
          <path d="M24 27l2-8M21.500 23l5-5 3 5" stroke="#fff" strokeWidth="2" fill="none" />
          <path d="M46 44l19-39q1-2 4-2h3q2 0 2.500 2l6 39h-8l-1-8H58l-4 8zM61 29h9l-2-15z" fill="url(#ask)" />
          <path d="M87 16h8l-5 28h-8z" fill="#ff8a52" /><circle cx="93" cy="7" r="4.500" fill="#ff8a52" />
        </svg>
        <div className="ml-[27px] w-[749px] overflow-hidden pb-[2px] text-[42.500px] leading-[60px] whitespace-nowrap text-[#999]">葛卫东日赚近200亿！大佬还持有哪…</div>
        <div className="flex size-[84px] items-center justify-center rounded-full bg-linear-to-tr from-[#ff4d00] from-40% to-[#ff9a48]">
          <svg viewBox="0 0 44 40" className="h-[38px] w-[42px]" fill="none" stroke="#fff" strokeWidth="5" strokeLinecap="round" strokeLinejoin="round"><path d="M3 20h38M24 4l17 16-17 16" /></svg>
        </div>
      </div>
    </div>
  </div>
}

function IndexBar() {
  return <div className="flex h-[106px] items-center border-y-2 border-t-[#d6d8db] border-b-[#e6e8ea] pt-[5px] pl-[37px] text-[41.500px] leading-none font-medium whitespace-nowrap text-[#f02626]">
    <span className="w-[280px] font-normal text-[#2b2b2b]">创业板指</span>
    <span className="w-[202px] tracking-[-1.200px]">3152.67</span>
    <span className="w-[170px] tracking-[-1.200px]">1.47%</span>
    <span className="w-[160px] tracking-[-.3px]">45.61</span>
    <span className="w-[171px] text-[#2b2b2b]">2274亿</span>
    <svg viewBox="0 0 24 14" className="h-[12px] w-[24px]" fill="none" stroke="#666" strokeWidth="2.600"><path d="M2 13L12 2l10 11" /></svg>
  </div>
}

function TradeBar() {
  return <div className="flex h-[165px] pt-[18px] pl-[36px] leading-none">
    <div className="flex h-[99px] w-[305px] items-center justify-center rounded-[20px] bg-linear-to-b from-[#f4524d] to-[#ea7069] pb-[2px] text-[46px] font-medium text-white">买入</div>
    <div className="ml-[12px] flex h-[99px] w-[305px] items-center justify-center rounded-[20px] bg-linear-to-b from-[#3b77f8] to-[#6c98ff] pb-[2px] text-[46px] font-medium text-white">卖出</div>
    <div className="ml-[49px] flex w-[82px] flex-col items-center text-[32px] text-[#666]">
      <span className="-mt-[2px] h-[70px] text-[54px] font-medium text-[#2b2b2b]">撤</span>撤单
    </div>
    <div className="ml-[33px] flex w-[117px] flex-col items-center text-[32px] text-[#666]">
      <svg viewBox="0 0 54 60" className="-mt-[5px] mb-[13px] h-[60px] w-[54px]" fill="none" stroke="#333" strokeWidth="4.500" strokeLinejoin="round">
        <path d="M24 4q3-2 6 0l18 10q3 2 3 5v22q0 3-3 5L30 56q-3 2-6 0L6 46q-3-2-3-5V19q0-3 3-5z" /><circle cx="27" cy="30" r="9" />
      </svg>设自选
    </div>
    <div className="ml-[30px] flex w-[86px] flex-col items-center text-[32px] text-[#666]">
      <svg viewBox="0 0 48 10" className="mt-[23px] mb-[35px] h-[10px] w-[48px]" fill="#333"><circle cx="5" cy="5" r="4.500" /><circle cx="24" cy="5" r="4.500" /><circle cx="42" cy="5" r="4.500" /></svg>更多
    </div>
  </div>
}

export default function App() {
  return <div className="h-[2400px] w-[1080px] overflow-hidden bg-white font-['Noto_Sans_CJK_SC','Noto_Sans',sans-serif]">
    <StatusBar />
    <Header />
    <Quotes />
    <Tabs />
    <AverageRow />
    <PriceChart />
    <VolumeSection />
    <FlowSection />
    <DateAxis />
    <AskAi />
    <div className="h-[281px] bg-[#f7f8fa]">
      <IndexBar />
      <TradeBar />
      <div className="mx-auto h-[7px] w-[432px] rounded-full bg-[#b9babc]" />
    </div>
  </div>
}
